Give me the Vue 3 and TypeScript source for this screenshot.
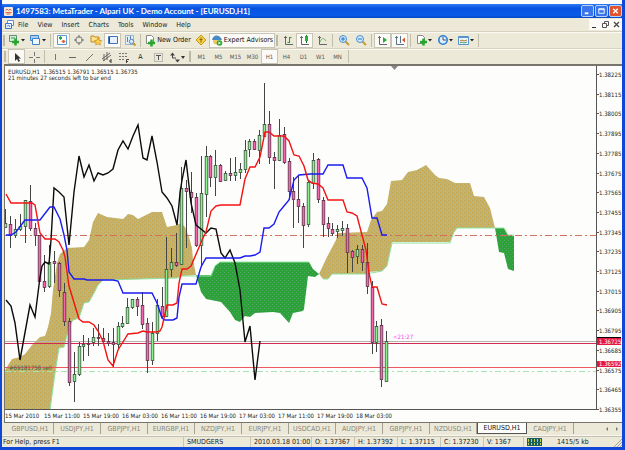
<script setup lang="ts">
type Candle = [open: number, close: number, high: number, low: number]

const menus = ['File', 'View', 'Insert', 'Charts', 'Tools', 'Window', 'Help']
const frames = ['M1', 'M5', 'M15', 'M30', 'H1', 'H4', 'D1', 'W1', 'MN']
const tabs = ['GBPUSD,H1', 'USDJPY,H1', 'GBPJPY,H1', 'EURGBP,H1', 'NZDJPY,H1', 'EURJPY,H1', 'USDCAD,H1', 'AUDJPY,H1', 'GBPJPY,H1', 'NZDUSD,H1', 'EURUSD,H1', 'CADJPY,H1']
const times = ['15 Mar 2010', '15 Mar 11:00', '15 Mar 19:00', '16 Mar 03:00', '16 Mar 11:00', '16 Mar 19:00', '17 Mar 03:00', '17 Mar 11:00', '17 Mar 19:00', '18 Mar 03:00']
const prices = Array.from({ length: 18 }, (_, i) => (1.38225 - i * 0.0011).toFixed(5))

// Screen heights: open, close, high, low. A close above its open is a rising bar.
const candles: Candle[] = [
  [227, 223, 209, 228], [224, 235, 216, 248], [235, 229, 219, 238], [229, 226, 214, 231], [226, 200, 200, 243],
  [201, 228, 185, 231], [228, 235, 223, 246], [235, 281, 235, 281], [281, 287, 255, 292], [286, 262, 245, 288],
  [261, 263, 251, 283], [263, 290, 262, 297], [292, 321, 283, 326], [321, 382, 318, 386], [381, 374, 352, 402],
  [374, 346, 342, 376], [346, 344, 335, 361], [343, 343, 338, 356], [342, 337, 328, 346], [337, 338, 324, 346],
  [338, 341, 328, 344], [341, 343, 333, 346], [342, 344, 328, 367], [344, 326, 322, 350], [326, 323, 316, 328],
  [323, 307, 298, 324], [307, 299, 299, 309], [299, 306, 297, 316], [305, 324, 292, 329], [323, 360, 318, 373],
  [360, 333, 322, 365], [333, 305, 299, 341], [306, 316, 287, 319], [316, 269, 237, 317], [269, 262, 248, 277],
  [262, 265, 233, 267], [264, 188, 167, 265], [188, 191, 180, 248], [192, 197, 172, 213], [197, 245, 193, 247],
  [245, 193, 156, 267], [194, 156, 146, 217], [156, 177, 155, 187], [177, 165, 150, 196], [165, 181, 164, 182],
  [180, 173, 171, 181], [173, 175, 158, 181], [175, 172, 157, 181], [172, 169, 163, 179], [169, 150, 140, 173],
  [149, 141, 139, 157], [141, 149, 139, 150], [150, 135, 130, 164], [136, 124, 83, 137], [124, 157, 111, 164],
  [157, 160, 152, 189], [160, 135, 119, 161], [134, 162, 127, 164], [161, 191, 158, 200], [191, 199, 177, 228],
  [199, 206, 175, 223], [206, 225, 203, 248], [224, 182, 180, 227], [183, 160, 153, 189], [159, 199, 158, 203],
  [200, 224, 197, 237], [223, 228, 217, 237], [229, 233, 223, 236], [231, 229, 225, 238], [230, 228, 221, 236],
  [228, 252, 224, 273], [251, 257, 250, 272], [256, 249, 245, 264], [249, 262, 245, 271], [262, 286, 243, 294],
  [287, 342, 281, 354], [342, 326, 321, 352], [325, 379, 319, 387], [381, 341, 331, 381],
]
const bars = candles.map(([open, close, high, low], i) => ({
  x: Math.round(5.3 + i * 4.883) + 0.5,
  top: Math.min(open, close) + 0.5,
  size: Math.max(Math.abs(close - open), 1),
  high,
  low,
  tone: close < open ? 'up' : 'down',
}))
</script>

<template>
  <main class="window">
    <header class="title">
      <svg class="logo" viewBox="0 0 9 9"><rect width="9" height="9" rx="1" fill="#f4e8de" /><path d="M1.5 3.5 3 2l1.500 1.500L6 2l1.500 1.500M1.500 5.500h6M2.500 7h4" stroke="#df6a45" fill="none" /></svg>
      <h1>1497583: MetaTrader - Alpari UK - Demo Account - [EURUSD,H1]</h1>
      <button class="cap" aria-label="Minimize"><svg viewBox="0 0 12 11"><path d="M3 8h4" stroke="#fff" stroke-width="2" /></svg></button>
      <button class="cap" aria-label="Maximize"><svg viewBox="0 0 12 11"><path d="M3 3h6v5H3zM3 4h6" stroke="#fff" fill="none" /></svg></button>
      <button class="cap close" aria-label="Close"><svg viewBox="0 0 12 11"><path d="m3.500 3 5 5m0-5-5 5" stroke="#fff" stroke-width="1.500" /></svg></button>
    </header>

    <nav class="menu" aria-label="Main">
      <svg class="doc" viewBox="0 0 10 9"><path d="M2.500.5h6v5h-6z" fill="#fff" stroke="#5f8fd0" /><path d="M.5 3.500h6v5h-6z" fill="#eaf3ff" stroke="#3c78c8" /><path d="M2 6.500 3.500 5 5 7" stroke="#3c78c8" fill="none" /></svg>
      <button v-for="m in menus" :key="m">{{ m }}</button>
      <span class="grow"></span>
      <div class="mdi">
        <button aria-label="Minimize chart"><svg viewBox="0 0 11 11"><path d="M3 8.500h4" stroke="#333" /></svg></button>
        <button aria-label="Restore chart"><svg viewBox="0 0 11 11"><path d="M4.500 4V2.500h4v4H7M2.500 4.500h4v4h-4z" stroke="#555" fill="none" /></svg></button>
        <button aria-label="Close chart"><svg viewBox="0 0 11 11"><path d="m3 3 5 5m0-5-5 5" stroke="#444" stroke-width="1.200" /></svg></button>
      </div>
    </nav>

    <div class="bar standard">
      <i class="grip"></i>
      <button aria-label="New chart" class="wide"><svg viewBox="0 0 18 14"><path d="M1.500 2.500h7v6h-7z" fill="#d9ecdb" stroke="#5d8f78" /><path d="M3 5h4" stroke="#2c9c48" /><path d="M4 9h7M7.500 5.500v7" stroke="#25a52e" stroke-width="2.500" /><path d="m13 6 4 0-2 2.500z" fill="#222" /></svg></button>
      <button aria-label="Profiles" class="wide"><svg viewBox="0 0 18 14"><path d="M1.500 2.500h8v5h-8z" fill="#a9cdf3" stroke="#3c83ca" /><path d="M3.500 5.500h7v6h-7z" fill="#eff7ff" stroke="#3c83ca" /><path d="m13 6 4 0-2 2.500z" fill="#222" /></svg></button>
      <i class="rule"></i>
      <button aria-label="Market watch" class="on"><svg viewBox="0 0 14 14"><path d="M2.500 2.500h9v9h-9z" fill="#fff" stroke="#5a9cd8" /><path d="m4 5 1.500-1.500L7 5 5.500 6.500z" fill="#27a73a" stroke="#27a73a" /><path d="M7 8.500 8.500 7 10 8.500 8.500 10z" fill="#e35a35" stroke="#e35a35" /></svg></button>
      <button aria-label="Data window"><svg viewBox="0 0 14 14"><circle cx="7" cy="7" r="3.300" fill="none" stroke="#777" /><path d="M7 2v3m0 4v3M2 7h3m4 0h3" stroke="#777" /></svg></button>
      <button aria-label="Navigator"><svg viewBox="0 0 14 14"><path d="M2 3h3l1 1h4v5H2z" fill="#ffe187" stroke="#bd8b28" /><path d="m9 5 1.200 2.300 2.500.4-1.800 1.800.4 2.500L9 10.800 6.700 12l.4-2.500-1.800-1.800 2.500-.4z" fill="#ffd24e" stroke="#c68a1c" stroke-width=".7" /></svg></button>
      <button aria-label="Terminal" class="on"><svg viewBox="0 0 14 14"><path d="M2.500 3.500h9v7h-9z" fill="#e6f1fc" stroke="#3d74b8" /><path d="M3.500 4v6" stroke="#244b83" /></svg></button>
      <button aria-label="Strategy tester"><svg viewBox="0 0 14 14"><path d="M2.500 2.500h8v9h-8z" fill="#e4eef8" stroke="#9ab5cc" /><path d="M4.500 4v5m3-6v3" stroke="#5685b3" /><circle cx="8.500" cy="8.500" r="2.200" fill="#d3edff" stroke="#5385b8" /><path d="m10 10 2.500 2.500" stroke="#c49830" stroke-width="2" /></svg></button>
      <i class="rule"></i>
      <button class="label order"><svg viewBox="0 0 12 14"><path d="M2.500 2.500h5l2 2v6h-7z" fill="#fff" stroke="#888" /><path d="M4 10h7M7.500 6.500v7" stroke="#25a52e" stroke-width="2.500" /></svg>New Order</button>
      <button aria-label="Meta editor"><svg viewBox="0 0 14 14"><path d="m7 2 5 5-5 5-5-5z" fill="#f6ce45" stroke="#c79d1d" /><path d="M7 4.500v5M5.500 6.500h3" stroke="#8d6812" /></svg></button>
      <button class="label on experts"><svg viewBox="0 0 12 14"><circle cx="5.500" cy="8" r="3.500" fill="#f0c765" /><path d="M1 7c1-6 8-6 10 0z" fill="#478bc2" /><circle cx="8.500" cy="10" r="2.800" fill="#2aab36" /><path d="m7.500 8.500 2.500 1.500-2.500 1.500z" fill="#fff" /></svg>Expert Advisors</button>
      <i class="grip"></i>
      <button aria-label="Bar chart"><svg viewBox="0 0 14 14"><path d="M4.500 3v8.500H12M3 4.500h3" stroke="#666" fill="none" /><path d="M8.500 4v6m0-5.500h2M6.500 9.500h2" stroke="#28963a" /></svg></button>
      <button aria-label="Candlesticks" class="on"><svg viewBox="0 0 14 14"><path d="M3.500 3v8.500H11M2 4.500h3" stroke="#666" fill="none" /><path d="M8.500 2v8" stroke="#176d23" /><path d="M7 3h3v5H7z" fill="#27b13a" /></svg></button>
      <button aria-label="Line chart"><svg viewBox="0 0 14 14"><path d="M4.500 3v8.500H12M3 4.500h3" stroke="#666" fill="none" /><path d="M5 9c2-5 4-4 6-1" stroke="#6ab36e" fill="none" /></svg></button>
      <i class="rule"></i>
      <button aria-label="Zoom in"><svg viewBox="0 0 14 14"><path d="m8 8 4 4" stroke="#c89b31" stroke-width="2" /><circle cx="6" cy="6" r="3.500" fill="#cfeaff" stroke="#4b90cf" /><path d="M4 6h4M6 4v4" stroke="#2577c3" /></svg></button>
      <button aria-label="Zoom out"><svg viewBox="0 0 14 14"><path d="m8 8 4 4" stroke="#c89b31" stroke-width="2" /><circle cx="6" cy="6" r="3.500" fill="#cfeaff" stroke="#4b90cf" /><path d="M4 6h4" stroke="#2577c3" /></svg></button>
      <i class="rule"></i>
      <button aria-label="Auto scroll" class="on"><svg viewBox="0 0 14 14"><path d="M3.500 3v8.500H11M2 4.500h3" stroke="#666" fill="none" /><path d="m7 4 4 3-4 3z" fill="#2ca83b" /></svg></button>
      <button aria-label="Chart shift" class="on"><svg viewBox="0 0 14 14"><path d="M3.500 3v8.500H11M2 4.500h3M7.500 3v7" stroke="#5b7186" fill="none" /><path d="m9 7 3-2.500v5z" fill="#d4532f" /></svg></button>
      <i class="rule"></i>
      <button aria-label="Indicators" class="wide"><svg viewBox="0 0 18 14"><path d="M2.500 2.500h5l2 2v6h-7z" fill="#fff" stroke="#888" /><path d="M5 9h7M8.500 5.500v7" stroke="#25a52e" stroke-width="2.500" /><path d="m13 6 4 0-2 2.500z" fill="#222" /></svg></button>
      <button aria-label="Periods" class="wide"><svg viewBox="0 0 18 14"><circle cx="7" cy="7" r="4.200" fill="#ddefff" stroke="#317dcb" stroke-width="1.600" /><path d="M7 4v3h3" stroke="#456" fill="none" /><path d="m13 6 4 0-2 2.500z" fill="#222" /></svg></button>
      <button aria-label="Templates" class="wide"><svg viewBox="0 0 18 14"><path d="M1.500 3.500h10v8h-10z" fill="#edf6ff" stroke="#5794cf" /><path d="M2 4h9" stroke="#5794cf" stroke-width="2" /><path d="m3 8 2-1 2 1 3-1" stroke="#bf7337" fill="none" /><path d="m3 10 2-1 2 1 3-1" stroke="#45a457" fill="none" /><path d="m13 6 4 0-2 2.500z" fill="#222" /></svg></button>
      <i class="rule"></i>
    </div>

    <div class="bar drawing">
      <i class="grip"></i>
      <button aria-label="Cursor" class="on"><svg viewBox="0 0 14 14"><path d="M5 3v8l2-2 1.500 3L10 11 8.500 8.500H11z" fill="#333" /></svg></button>
      <button aria-label="Crosshair"><svg viewBox="0 0 14 14"><path d="M7.500 2v4m0 3v4M2 7.500h4m3 0h4" stroke="#777" /></svg></button>
      <i class="rule"></i>
      <button aria-label="Vertical line"><svg viewBox="0 0 14 14"><path d="M6.500 4v6" stroke="#777" /></svg></button>
      <button aria-label="Horizontal line"><svg viewBox="0 0 14 14"><path d="M3 7.500h7" stroke="#666" /></svg></button>
      <button aria-label="Trendline"><svg viewBox="0 0 14 14"><path d="m3 11 7-7" stroke="#777" /></svg></button>
      <button aria-label="Equidistant channel"><svg viewBox="0 0 14 14"><path d="m2 9 8-6M3 11l8-6M4 4v7m3-9v8" stroke="#666" /><path d="M12 10h-2v2h2" stroke="#333" fill="none" /></svg></button>
      <button aria-label="Fibonacci retracement"><svg viewBox="0 0 14 14"><path d="M2 3.500h9M2 6.500h9M2 9.500h6" stroke="#777" stroke-dasharray="2 1" /><path d="M9.500 13V9.500H12M9.500 11.500H11" stroke="#444" fill="none" /></svg></button>
      <button>A</button>
      <button aria-label="Text label"><svg viewBox="0 0 14 14"><path d="M3.500 3.500h8v8h-8z" fill="none" stroke="#888" stroke-dasharray="1 1" /><path d="M5 5.500h5M7.500 5v5" stroke="#555" /></svg></button>
      <button aria-label="Arrows" class="wide"><svg viewBox="0 0 18 14"><path d="m2 5.500 2.500-3 2.500 3zM7 9.500h5l-2.500 3z" fill="#444" /><path d="M4.500 5v3H8" stroke="#444" fill="none" /><path d="m13 6 4 0-2 3z" fill="#333" /></svg></button>
      <i class="grip"></i>
      <button v-for="f in frames" :key="f" class="frame" :class="{ on: f === 'H1' }">{{ f }}</button>
      <i class="rule"></i>
    </div>

    <section class="chart" aria-label="EURUSD, H1">
      <div class="plot">
        <svg viewBox="5 66 591 343" preserveAspectRatio="none">
          <defs>
            <pattern id="sand" width="4" height="4" patternUnits="userSpaceOnUse"><rect width="4" height="4" fill="#c6b269" /><path d="M0 0h1v1H0zM2 2h1v1H2z" fill="#c7a343" /><path d="M2 0h1v1H2zM0 2h1v1H0z" fill="#bab37c" /></pattern>
            <pattern id="leaf" width="4" height="4" patternUnits="userSpaceOnUse"><rect width="4" height="4" fill="#2ca337" /><path d="M0 0h1v1H0zM2 2h1v1H2z" fill="#4fa566" /></pattern>
          </defs>
          <path fill="url(#sand)" d="M5 370 12 359 20 357 25 354 32 345 40 337 45 336 48 327 51 313 53 290 57 263 60 254 67 248 84 247 89 240 93 222 98 213 107 217 123 219 128 214 133 215 138 219 152 212 162 212 167 227 177 225 181 223 185 227 189 237 192 248 193 260 196 275 182 276 177 278 103 280 98 285 94 293 89 302 84 303 79 318 73 320 69 327 64 347 59 348 55 373 50 410H5z" />
          <path fill="url(#sand)" d="M319 274 327 257 336 240 338 233 367 232 371 220 377 212 382 211 387 204 391 181 402 180 408 172 417 170 426 165 435 175 439 178 447 179 455 183 470 183 474 196 484 197 490 208 493 220 495 228H457L454 232 450 242H392L387 266 382 271 368 272 366 274H332L328 279H323z" />
          <path fill="url(#leaf)" d="M196 275H211L215 266 220 262H309L313 269 319 274 315 277 308 276 304 309 303 311 293 313 289 323 280 313 273 312 255 313 250 317 245 316 240 322 235 320 230 312 221 302 206 299 201 292z" />
          <path fill="url(#leaf)" d="M495 228H504L508 235 514 236V271L508 269 504 253 499 252 497 240z" />
          <path class="edge" d="M50 410 55 373 59 348 64 347 69 327 73 320 79 318 84 303 89 302 94 293 98 285 103 280 177 278 182 276H211L215 266 220 262H309M323 279H328L332 274H366L382 271 387 266 392 243H450L454 232 457 228H504L508 235H514" />
          <path d="M5 235.500H597" stroke="#d4705f" stroke-dasharray="7 3 2 3" />
          <path d="M5 341.500H597" stroke="#b5b3ab" />
          <path d="M5 343.500H597" stroke="#d02a55" />
          <path d="M5 367.500H597" stroke="#ec5a60" />
          <path d="M5 371.500H597" stroke="#a5e4ad" stroke-dasharray="6 3 2 3" />
          <g v-for="b in bars" :key="b.x" :class="b.tone">
            <path class="wick" :d="`M${b.x} ${b.high}V${b.low}`" />
            <rect :x="b.x - 1.3" :y="b.top" width="2.6" :height="b.size" />
          </g>
          <path class="line" stroke="#0b0b0b" d="M6 300 11 306 15 323 20 360 30 305 35 317 40 277 42 266 45 262 49 264 51 240 54 188 59 192 64 197 69 245 74 192 79 156 84 177 89 165 94 181 98 173 103 175 108 173 113 169 118 150 123 141 128 149 133 136 138 125 143 158 147 160 152 136 157 162 162 192 167 198 172 206 177 225 180 193 182 180 186 160 191 203 196 225 201 229 206 233 211 228 216 229 221 253 225 258 230 250 235 263 240 290 245 342 250 326 255 380 260 341" />
          <path class="line" stroke="#1b1bf0" d="M6 235H11L16 232 25 220H40L50 207H54L60 219 64 235 67 250 69 272 74 279H84L87 280H113L118 281 123 293H152L157 303 162 318 165 320H173L177 318 179 297 182 284H196L201 267 206 258H240L245 256H250L255 255 260 252 262 240 264 228H269L274 224 279 212 284 206 289 200 292 188 294 180 299 175 310 174H323L328 165H343L347 178H362L367 188 372 218H377L382 235H387" />
          <path class="line" stroke="#f31313" d="M6 194 11 203H32L35 205 40 233 45 239H55L59 242 63 250 65 257 69 286 79 319 83 322H89L94 325 98 331 103 341 108 360 113 366 118 350 128 334 138 333 143 331 147 332H157L160 331 162 327 167 305H173L177 303 179 283 182 269H187L191 266 200 245 202 240 206 232 211 211 216 206 221 205H240L245 179 250 167H255L260 157 265 132H269L274 136H284L289 141 294 155 299 156 304 166 308 180 312 183 318 184 323 188 328 200H343L347 212 352 213 357 216 362 235 366 250 369 273 372 287H377L382 304 387 305" />
          <path d="M391 66h7l-3.500 4z" fill="#888" />
          <text class="note" x="393" y="339">&lt;21:27</text>
          <text class="trade" x="9" y="370">#69181758 sell</text>
        </svg>
        <p class="info">EURUSD,H1&nbsp; 1.36515 1.36791 1.36515 1.36735<br>21 minutes 27 seconds left to bar end</p>
      </div>
      <div class="scale">
        <span v-for="p in prices" :key="p">{{ p }}</span>
        <b class="quote bid">1.36725</b>
        <b class="quote level">1.36592</b>
      </div>
      <div class="times"><span v-for="t in times" :key="t">{{ t }}</span></div>
    </section>

    <nav class="tabs" aria-label="Charts">
      <button v-for="(t, i) in tabs" :key="i" :class="{ active: i === 10 }">{{ t }}</button>
      <span class="grow"></span>
      <button class="arrow" aria-label="Previous tabs"><svg viewBox="0 0 6 6"><path d="M4 1v4L2 3z" fill="#777" /></svg></button>
      <button class="arrow" aria-label="Next tabs"><svg viewBox="0 0 6 6"><path d="M2 1v4l2-2z" fill="#777" /></svg></button>
    </nav>

    <footer class="status">
      <span class="help">For Help, press F1</span>
      <span class="user">SMUDGERS</span>
      <span class="date">2010.03.18 01:00</span>
      <span>O: 1.37367</span>
      <span>H: 1.37392</span>
      <span>L: 1.37115</span>
      <span>C: 1.37230</span>
      <span class="volume">V: 1367</span>
      <span class="traffic"><svg viewBox="0 0 15 8"><rect width="15" height="8" fill="#1c5f63" /><path d="M1.500 1v6m3-6v6m3-6v6m3-6v6m3-6v6" stroke="#b9d050" stroke-dasharray="3 1" /></svg>1415/5 kb</span>
      <svg class="size" viewBox="0 0 9 9"><path d="m1 9 8-8M4 9l5-5M7 9l2-2" stroke="#a5a293" /></svg>
    </footer>
  </main>
</template>

<style>
body { margin: 0; background: #fdfefc; }
</style>

<style scoped>
* { box-sizing: border-box; }
.window {
  height: 100vh;
  border: solid #1147d6;
  border-width: 0 3px 3px 2px;
  display: flex;
  flex-direction: column;
  background: #ece9d8;
  color: #222;
  font: 7px/10px "DejaVu Sans Condensed", "DejaVu Sans", sans-serif;
  overflow: hidden;
}
button { border: 0; padding: 0; background: none; color: inherit; font: inherit; white-space: nowrap; }
svg { display: block; }
.grow { flex: 1; }

.title {
  display: flex;
  align-items: center;
  gap: 1px;
  height: 18px;
  flex: none;
  margin: 0 -3px 0 -2px;
  padding: 0 3px 0 4px;
  border-top: 4px solid #fdfefc;
  background: linear-gradient(#2c7cf5, #0752e0 30%, #0a5bea 80%, #0648c4);
}
.logo { width: 9px; height: 9px; }
h1 { flex: 1; margin: 0 0 0 2px; color: #fff; font: bold 8px/12px Lato, "DejaVu Sans Condensed", sans-serif; white-space: nowrap; }
.cap { width: 13px; height: 12px; border: 1px solid #b9d0fa; border-radius: 2px; background: #3a75ec; }
.cap svg { width: 100%; height: 100%; }
.close { background: #e0532c; }

.menu { display: flex; align-items: center; height: 13px; flex: none; padding-left: 3px; }
.doc { width: 10px; height: 9px; margin-right: 3px; }
.menu > button { margin-right: 9px; }
.mdi { display: flex; height: 11px; background: #fbfaf6; }
.mdi button { width: 11px; }
.mdi svg { width: 11px; height: 11px; }

.bar { display: flex; align-items: center; flex: none; border-top: 1px solid #d6d2bf; box-shadow: inset 0 1px #faf9f2; }
.standard { height: 17px; }
.drawing { height: 16px; }
.bar button { display: flex; align-items: center; justify-content: center; flex: none; width: 17px; height: 15px; }
.bar svg { width: 14px; height: 14px; flex: none; }
.bar .wide { width: 21px; }
.bar .wide svg { width: 18px; }
.bar .on { background: #fbfaf6; border: 1px solid #c9c5b4; }
.bar .label { gap: 1px; color: #111; }
.bar .label svg { width: 12px; }
.bar .order { width: 49px; }
.bar .experts { width: 66px; }
.grip { width: 2px; height: 11px; margin: 0 2px; border: solid #bdb9a6; border-width: 0 1px; flex: none; }
.rule { width: 1px; height: 13px; margin: 0 2px; background: #c2beac; flex: none; }
.standard .grip { margin: 0 1px; }
.bar .frame { width: 17px; color: #555; font-size: 6px; }

.chart {
  flex: 1;
  min-height: 0;
  display: grid;
  grid-template: minmax(0, 1fr) 12px / minmax(0, 1fr) 25px;
  margin-left: 2px;
  border: solid #77746c;
  border-width: 2px 0 1px 1px;
  background: #fdfefc;
  font: 6px/8px "DejaVu Sans Condensed", sans-serif;
}
.plot { position: relative; border: solid #555; border-width: 0 1px 1px 0; }
.plot svg { width: 100%; height: 100%; }
.info { position: absolute; top: 3px; left: 3px; margin: 0; line-height: 6px; white-space: nowrap; }
.wick { stroke: #444; }
.up rect { fill: #8df08f; stroke: #35523a; stroke-width: .8; }
.down rect { fill: #f765b0; stroke: #573047; stroke-width: .8; }
.line { fill: none; stroke-width: 1.4; }
.edge { fill: none; stroke: #8fe2a0; }
.note { fill: #f143ea; font-size: 6px; }
.trade { fill: #3a6340; font-size: 6px; }

.scale { position: relative; display: flex; flex-direction: column; justify-content: space-between; padding-top: 5px; margin-bottom: -3px; line-height: 7px; }
.scale span { padding-left: 2px; }
.scale span::before { content: ""; float: left; width: 2px; height: 1px; margin: 3px 0 0 -2px; background: #555; }
.quote { position: absolute; left: 0; width: 24px; padding-left: 2px; background: #e5173f; color: #fff; font-weight: normal; line-height: 7px; }
.bid { top: 78%; border-top: 1px solid #000; }
.level { top: 85%; line-height: 6px; }
.times { grid-column: 1 / 3; display: grid; grid-auto-flow: column; grid-auto-columns: 39px; }
.times span { padding-top: 2px; white-space: nowrap; }

.tabs { display: flex; height: 13px; flex: none; padding-left: 5px; border-bottom: 1px solid #f8f6ee; color: #8a877b; }
.tabs button { width: 47px; height: 11px; border-right: 1px solid #a5a294; }
.tabs .active { width: 50px; background: #fdfefc; border: 1px solid #555; border-top: 0; color: #111; }
.tabs .arrow { width: 10px; border: 0; }
.arrow svg { width: 6px; height: 6px; margin: auto; }

.status { display: flex; align-items: center; height: 11px; flex: none; border-top: 1px solid #c4c1b0; }
.status span { width: 43px; padding-left: 3px; border-left: 1px solid #c9c6b6; white-space: nowrap; }
.status .help { flex: 1; padding-left: 1px; border: 0; }
.status .user { width: 67px; }
.status .date { width: 61px; }
.status .volume { width: 40px; }
.status .traffic { display: flex; align-items: center; gap: 15px; width: 90px; }
.traffic svg { width: 15px; height: 8px; }
.size { width: 9px; height: 9px; }
</style>
